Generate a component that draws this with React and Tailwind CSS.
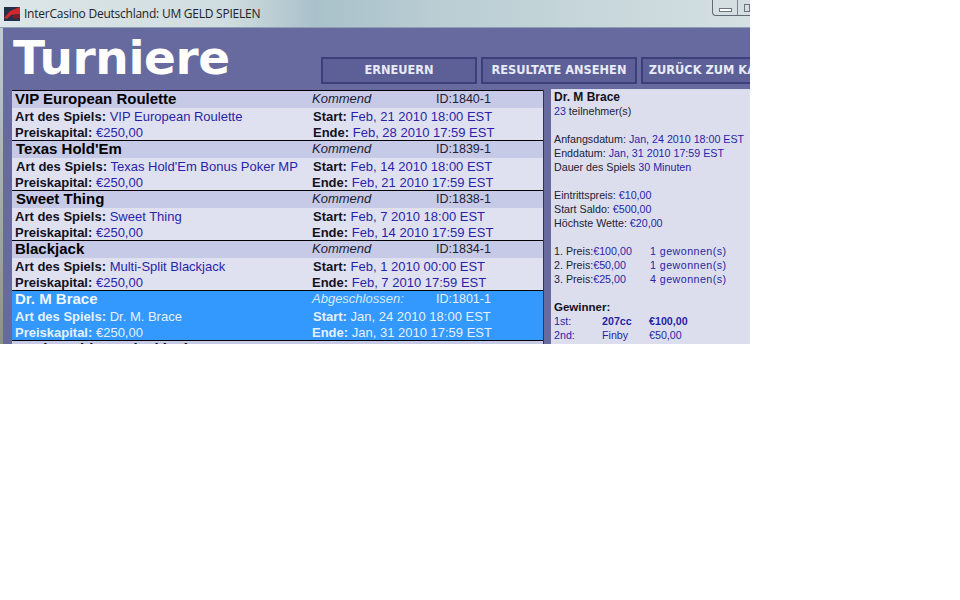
const rows = [
  { name: "VIP European Roulette", status: "Kommend", id: "ID:1840-1", game: "VIP European Roulette", start: "Feb, 21 2010 18:00 EST", end: "Feb, 28 2010 17:59 EST", nameX: "pl-[3px]", artX: "pl-[3px]", endX: "pl-[1px]" },
  { name: "Texas Hold'Em", status: "Kommend", id: "ID:1839-1", game: "Texas Hold'Em Bonus Poker MP", start: "Feb, 14 2010 18:00 EST", end: "Feb, 21 2010 17:59 EST", nameX: "pl-[4px]", artX: "pl-[4px]", endX: "pl-0" },
  { name: "Sweet Thing", status: "Kommend", id: "ID:1838-1", game: "Sweet Thing", start: "Feb, 7 2010 18:00 EST", end: "Feb, 14 2010 17:59 EST", nameX: "pl-[4px]", artX: "pl-[3px]", endX: "pl-0" },
  { name: "Blackjack", status: "Kommend", id: "ID:1834-1", game: "Multi-Split Blackjack", start: "Feb, 1 2010 00:00 EST", end: "Feb, 7 2010 17:59 EST", nameX: "pl-[3px]", artX: "pl-[3px]", endX: "pl-0" },
  { name: "Dr. M Brace", status: "Abgeschlossen:", id: "ID:1801-1", game: "Dr. M. Brace", start: "Jan, 24 2010 18:00 EST", end: "Jan, 31 2010 17:59 EST", nameX: "pl-[3px]", artX: "pl-[3px]", endX: "pl-0", active: true },
  { name: "Oasis Hold'em Blackjack", status: "Abgeschlossen:", id: "ID:1804-1", game: "", start: "", end: "", nameX: "pl-[3px]", artX: "pl-[3px]", endX: "pl-0" },
];

function Row({ r }) {
  const label = r.active ? "text-[#e6f0ff]" : "text-[#111122]";
  const value = r.active ? "text-[#e6f0ff]" : "text-[#2a1fa8]";
  return (
    <div className={`h-[50px] border-t border-black ${r.active ? "bg-[#3399ff]" : "bg-[#e0e1f0]"}`}>
      <div className={`h-[17px] flex items-start ${r.active ? "" : "bg-[#c7cae6]"}`}>
        <div className={`w-[300px] ${r.nameX} text-[15px] font-bold leading-[15px] ${r.active ? "text-[#f0f5ff]" : "text-black"}`}>{r.name}</div>
        <div className={`w-[124px] text-[13px] italic leading-[15px] ${r.active ? "text-[#d8e8ff]" : "text-[#222233]"}`}>{r.status}</div>
        <div className={`text-[12.5px] leading-[17px] ${r.active ? "text-[#e6f0ff]" : "text-[#222233]"}`}>{r.id}</div>
      </div>
      <div className="flex h-[16px] pt-px text-[13px] leading-[16px]">
        <div className={`w-[301px] ${r.artX} whitespace-nowrap`}>
          <b className={label}>Art des Spiels:</b> <span className={value}>{r.game}</span>
        </div>
        <div className="whitespace-nowrap">
          <b className={label}>Start:</b> <span className={value}>{r.start}</span>
        </div>
      </div>
      <div className="flex h-[16px] pt-px text-[13px] leading-[16px]">
        <div className="w-[300px] pl-[3px] whitespace-nowrap">
          <b className={label}>Preiskapital:</b> <span className={value}>€250,00</span>
        </div>
        <div className={`whitespace-nowrap ${r.endX}`}>
          <b className={label}>Ende:</b> <span className={value}>{r.end}</span>
        </div>
      </div>
    </div>
  );
}

function Btn({ children, w }) {
  return (
    <div className={`${w} h-[27px] shrink-0 flex items-center justify-center pt-px bg-[#5c6096] border-2 border-[#3c4078] text-[#e8eaf8] text-[11.4px] font-bold whitespace-nowrap overflow-hidden font-['DejaVu_Sans',sans-serif]`}>
      {children}
    </div>
  );
}

const V = ({ children }) => <span className="text-[#2a1fa8]">{children}</span>;

export default function App() {
  return (
    <div className="w-[960px] h-[600px] bg-white font-['Liberation_Sans',sans-serif]">
      <div className="w-[750px] h-[344px] overflow-hidden relative">
        <div className="h-[28px] flex items-center pl-[4px] bg-[linear-gradient(90deg,#dde6e8_0%,#d0dde0_30%,#a9c1ca_42%,#b9cdd3_58%,#d5e0e2_100%)] border-b border-[#8f9fb0]">
          <svg width="16" height="14" viewBox="0 0 16 14" className="shrink-0">
            <rect width="16" height="14" fill="#23304a" />
            <path d="M0 11 L6 4 L16 0 L16 7 L7 8 L3 12 Z" fill="#d0282c" />
            <path d="M8 9 L16 7 L16 11 L10 12 Z" fill="#7c1c26" />
          </svg>
          <span className="ml-[4px] text-[12px] text-[#1c2226] font-['Open_Sans',sans-serif] whitespace-nowrap tracking-[-0.24px]">InterCasino Deutschland: UM GELD SPIELEN</span>
        </div>
        <div className="absolute right-0 top-0 w-[38px] h-[16px] bg-[#d5dfe2] border border-[#5f6a74] border-t-0 border-r-0 rounded-bl-[4px] flex items-center pl-[6px] pt-[5px]">
          <div className="w-[14px] h-[4px] border border-[#6a747c] bg-white" />
          <div className="ml-[5px] h-[15px] -mt-[5px] border-l border-[#7a858c]" />
          <div className="ml-[6px] w-[7px] h-[8px] -mt-[4px] border border-[#6a747c]" />
        </div>
        <div className="flex h-[316px]">
          <div className="w-[3px] bg-[linear-gradient(180deg,#c0ccd0,#8d9288)]" />
          <div className="flex-1 min-w-0 bg-[#666a9e]">
            <div className="h-[62px] flex">
              <div className="w-[318px] shrink-0 pl-[10px] h-[62px] text-[47px] leading-[60px] font-bold text-white font-['DejaVu_Sans',sans-serif] tracking-[-0.4px] overflow-hidden">Turniere</div>
              <div className="flex gap-[4px] pt-[29px]">
                <Btn w="w-[156px]">ERNEUERN</Btn>
                <Btn w="w-[156px]">RESULTATE ANSEHEN</Btn>
                <Btn w="w-[176px]">ZURÜCK ZUM KASSIERER</Btn>
              </div>
            </div>
            <div className="flex pl-[9px]">
              <div className="w-[532px] shrink-0 h-[254px] overflow-hidden border-r border-[#333355] box-border">
                {rows.map((r) => <Row key={r.id} r={r} />)}
              </div>
              <div className="ml-[7px] flex-1 h-[255px] -mt-px bg-[#dcdeed] pl-[3px] pt-[1px] text-[10.7px] leading-[14px] text-[#222233] whitespace-nowrap overflow-hidden">
                <div className="font-bold text-[12px] text-[#111122]">Dr. M Brace</div>
                <div><V>23</V> teilnehmer(s)</div>
                <div className="h-[14px]" />
                <div>Anfangsdatum: <V>Jan, 24 2010 18:00 EST</V></div>
                <div>Enddatum: <V>Jan, 31 2010 17:59 EST</V></div>
                <div>Dauer des Spiels <V>30 Minuten</V></div>
                <div className="h-[14px]" />
                <div>Eintrittspreis: <V>€10,00</V></div>
                <div>Start Saldo: <V>€500,00</V></div>
                <div>Höchste Wette: <V>€20,00</V></div>
                <div className="h-[14px]" />
                {[["1. Preis:", "€100,00", "1 gewonnen(s)"], ["2. Preis:", "€50,00", "1 gewonnen(s)"], ["3. Preis:", "€25,00", "4 gewonnen(s)"]].map((p) => (
                  <div key={p[0]} className="flex">
                    <div className="w-[96px]">{p[0]}<V>{p[1]}</V></div>
                    <span className="text-[#2a1fa8] tracking-[0.45px]">{p[2]}</span>
                  </div>
                ))}
                <div className="h-[14px]" />
                <div className="font-bold text-[11.5px] text-[#111122]">Gewinner:</div>
                <div className="flex font-bold">
                  <div className="w-[48px] font-normal"><V>1st:</V></div>
                  <div className="w-[47px]"><V>207cc</V></div>
                  <V>€100,00</V>
                </div>
                <div className="flex">
                  <div className="w-[48px]"><V>2nd:</V></div>
                  <div className="w-[47px]"><V>Finby</V></div>
                  <V>€50,00</V>
                </div>
              </div>
            </div>
          </div>
        </div>
      </div>
    </div>
  );
}
